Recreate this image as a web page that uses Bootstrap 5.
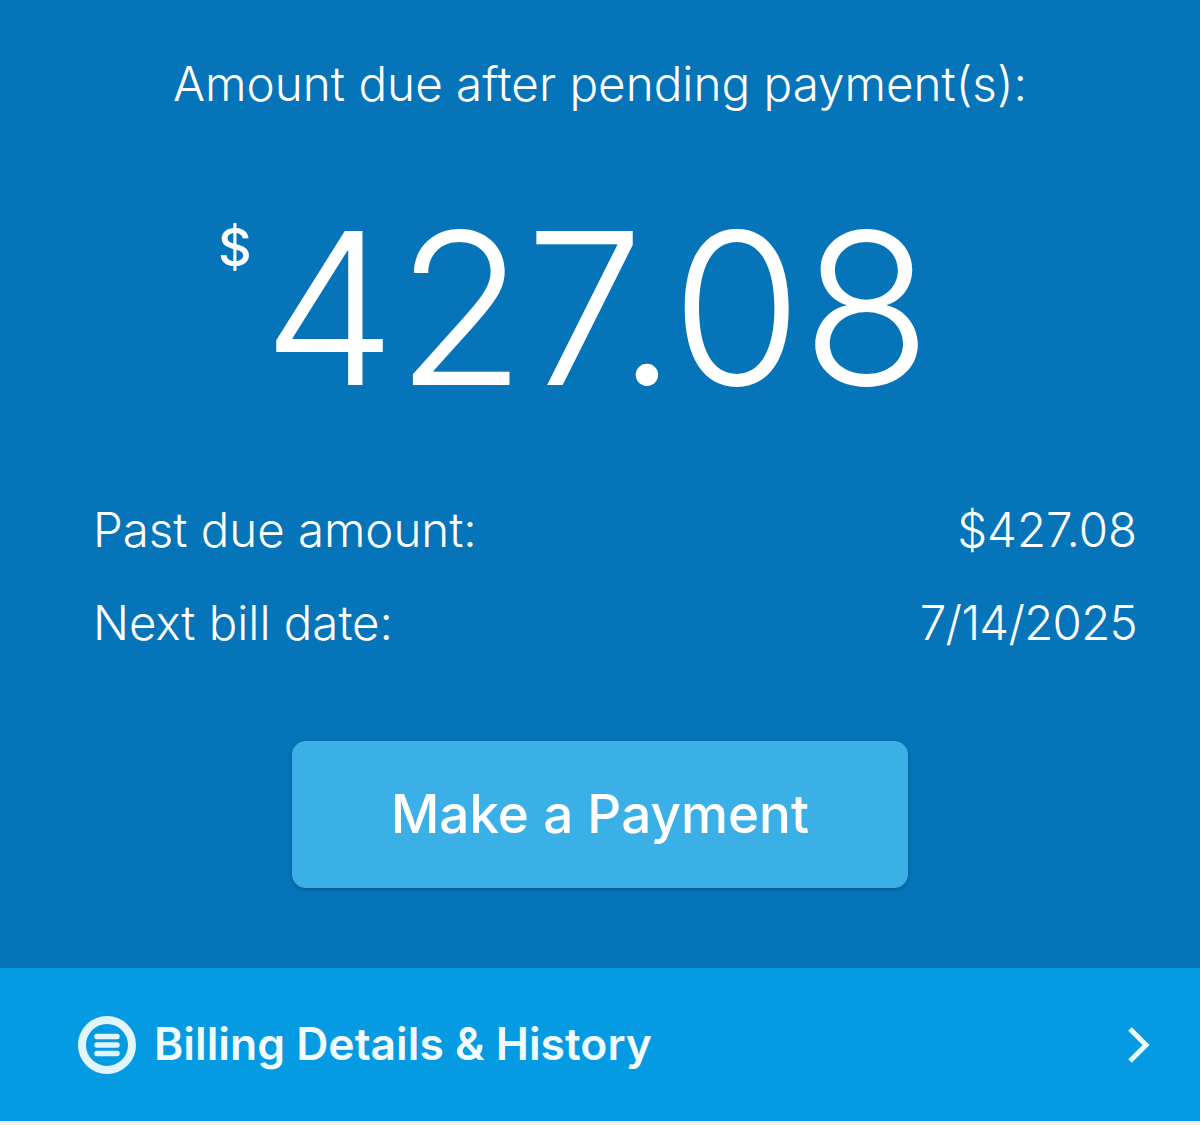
<!DOCTYPE html>
<html lang="en"><head><meta charset="utf-8">
<link href="https://cdn.jsdelivr.net/npm/bootstrap@5.3.0/dist/css/bootstrap.min.css" rel="stylesheet">
<style>
html,body{height:100%;}
body{background:#0574b8;color:#fff;font-family:Inter,"Liberation Sans",sans-serif;}
.bill-page{height:1125px;overflow:hidden;}
.bill-main{height:968px;padding-top:55px;}
.bill-title{font-size:47.6px;font-weight:300;line-height:58px;margin:0;}
.bill-amount{margin-top:100px;height:190px;padding-right:51px;}
.bill-cur{font-size:52px;font-weight:500;line-height:60px;margin-top:5px;margin-right:11px;}
.bill-num{font-size:212px;font-weight:300;line-height:190px;letter-spacing:-.4px;}
.bill-rows{padding:98px 63px 0 93px;font-size:47.4px;font-weight:300;line-height:58px;}
.bill-row{height:93px;}
.bill-date{letter-spacing:-.7px;}
.bill-btn{display:block;width:616px;height:147px;margin-top:54px;background:#3bb0e6;border:0;border-radius:14px;color:#fff;font-size:53px;font-weight:500;box-shadow:0 2px 4px rgba(0,0,0,.2);}
.bill-foot{flex:0 0 157px;background:#059be2;padding:0 49px 0 78px;border-bottom:4px solid #eef0ee;}
.bill-foot-label{font-size:44.5px;font-weight:600;margin-left:18px;color:#f0faff;}
</style></head><body>
<div class="bill-page d-flex flex-column">
<div class="bill-main">
<p class="bill-title text-center">Amount due after pending payment(s):</p>
<div class="bill-amount d-flex justify-content-center align-items-start">
<span class="bill-cur">$</span><span class="bill-num">427.08</span>
</div>
<div class="bill-rows">
<div class="bill-row d-flex justify-content-between"><span>Past due amount:</span><span>$427.08</span></div>
<div class="bill-row d-flex justify-content-between"><span>Next bill date:</span><span class="bill-date">7/14/2025</span></div>
</div>
<div class="d-flex justify-content-center"><button class="btn bill-btn" type="button">Make a Payment</button></div>
</div>
<div class="bill-foot d-flex align-items-center">
<svg width="58" height="58" viewBox="0 0 58 58"><circle cx="29" cy="29" r="25" fill="#059be2" stroke="#e2f5fd" stroke-width="8"/><g stroke="#e2f5fd" stroke-width="5.5" stroke-linecap="round"><path d="M19 20.5h20M19 29h20M19 37.5h20"/></g></svg>
<span class="bill-foot-label">Billing Details &amp; History</span>
<svg class="ms-auto" width="24" height="38" viewBox="0 0 24 38"><path d="M3 3l16 16L3 35" fill="none" stroke="#f0faff" stroke-width="5"/></svg>
</div>
</div>
</body></html>
